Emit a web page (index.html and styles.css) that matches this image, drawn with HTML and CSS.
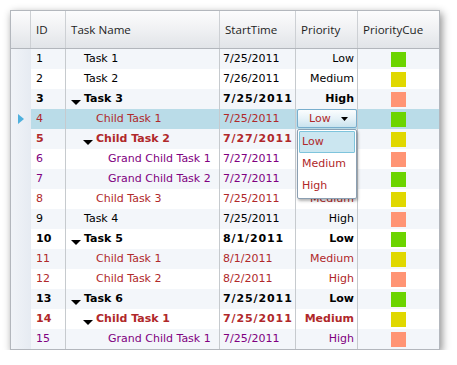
FILE: index.html
```html
<!DOCTYPE html>
<html>
  <head>
    <title>Tree Grid</title>
    <link rel="stylesheet" href="styles.css">
  </head>
  <body>
    <div class="grid">
      <div class="row head">
        <div class="cell ind"></div>
        <div class="cell">ID</div>
        <div class="cell">Task Name</div>
        <div class="cell">StartTime</div>
        <div class="cell">Priority</div>
        <div class="cell last">PriorityCue</div>
      </div>

      <div class="row alt">
        <div class="cell ind"></div>
        <div class="cell id">1</div>
        <div class="cell name lv0"><span class="slot"></span>Task 1</div>
        <div class="cell date">7/25/2011</div>
        <div class="cell prio">Low</div>
        <div class="cell last cue"><span class="sq low"></span></div>
      </div>
      <div class="row">
        <div class="cell ind"></div>
        <div class="cell id">2</div>
        <div class="cell name lv0"><span class="slot"></span>Task 2</div>
        <div class="cell date">7/26/2011</div>
        <div class="cell prio">Medium</div>
        <div class="cell last cue"><span class="sq med"></span></div>
      </div>
      <div class="row alt bold">
        <div class="cell ind"></div>
        <div class="cell id">3</div>
        <div class="cell name lv0"><span class="slot"><svg width="10" height="5" viewBox="0 0 10 5"><path d="M0 0h10l-5 5z"/></svg></span>Task 3</div>
        <div class="cell date">7/25/2011</div>
        <div class="cell prio">High</div>
        <div class="cell last cue"><span class="sq high"></span></div>
      </div>
      <div class="row sel child">
        <div class="cell ind"><svg width="6" height="10" viewBox="0 0 6 10"><path d="M0 0l6 5-6 5z" fill="#4fb0dd"/></svg></div>
        <div class="cell id">4</div>
        <div class="cell name lv1"><span class="slot"></span>Child Task 1</div>
        <div class="cell date">7/25/2011</div>
        <div class="cell prio edit">
          <div class="combo">Low<svg width="7" height="4" viewBox="0 0 7 4"><path d="M0 0h7l-3.5 4z"/></svg></div>
          <div class="popup">
            <div class="opt on">Low</div>
            <div class="opt">Medium</div>
            <div class="opt">High</div>
          </div>
        </div>
        <div class="cell last cue"><span class="sq low"></span></div>
      </div>
      <div class="row alt child bold">
        <div class="cell ind"></div>
        <div class="cell id">5</div>
        <div class="cell name lv1"><span class="slot"><svg width="10" height="5" viewBox="0 0 10 5"><path d="M0 0h10l-5 5z"/></svg></span>Child Task 2</div>
        <div class="cell date">7/27/2011</div>
        <div class="cell prio">Medium</div>
        <div class="cell last cue"><span class="sq med"></span></div>
      </div>
      <div class="row grand">
        <div class="cell ind"></div>
        <div class="cell id">6</div>
        <div class="cell name lv2"><span class="slot"></span>Grand Child Task 1</div>
        <div class="cell date">7/27/2011</div>
        <div class="cell prio">High</div>
        <div class="cell last cue"><span class="sq high"></span></div>
      </div>
      <div class="row alt grand">
        <div class="cell ind"></div>
        <div class="cell id">7</div>
        <div class="cell name lv2"><span class="slot"></span>Grand Child Task 2</div>
        <div class="cell date">7/27/2011</div>
        <div class="cell prio">Low</div>
        <div class="cell last cue"><span class="sq low"></span></div>
      </div>
      <div class="row child">
        <div class="cell ind"></div>
        <div class="cell id">8</div>
        <div class="cell name lv1"><span class="slot"></span>Child Task 3</div>
        <div class="cell date">7/25/2011</div>
        <div class="cell prio">Medium</div>
        <div class="cell last cue"><span class="sq med"></span></div>
      </div>
      <div class="row alt">
        <div class="cell ind"></div>
        <div class="cell id">9</div>
        <div class="cell name lv0"><span class="slot"></span>Task 4</div>
        <div class="cell date">7/25/2011</div>
        <div class="cell prio">High</div>
        <div class="cell last cue"><span class="sq high"></span></div>
      </div>
      <div class="row bold">
        <div class="cell ind"></div>
        <div class="cell id">10</div>
        <div class="cell name lv0"><span class="slot"><svg width="10" height="5" viewBox="0 0 10 5"><path d="M0 0h10l-5 5z"/></svg></span>Task 5</div>
        <div class="cell date">8/1/2011</div>
        <div class="cell prio">Low</div>
        <div class="cell last cue"><span class="sq low"></span></div>
      </div>
      <div class="row alt child">
        <div class="cell ind"></div>
        <div class="cell id">11</div>
        <div class="cell name lv1"><span class="slot"></span>Child Task 1</div>
        <div class="cell date">8/1/2011</div>
        <div class="cell prio">Medium</div>
        <div class="cell last cue"><span class="sq med"></span></div>
      </div>
      <div class="row child">
        <div class="cell ind"></div>
        <div class="cell id">12</div>
        <div class="cell name lv1"><span class="slot"></span>Child Task 2</div>
        <div class="cell date">8/2/2011</div>
        <div class="cell prio">High</div>
        <div class="cell last cue"><span class="sq high"></span></div>
      </div>
      <div class="row alt bold">
        <div class="cell ind"></div>
        <div class="cell id">13</div>
        <div class="cell name lv0"><span class="slot"><svg width="10" height="5" viewBox="0 0 10 5"><path d="M0 0h10l-5 5z"/></svg></span>Task 6</div>
        <div class="cell date">7/25/2011</div>
        <div class="cell prio">Low</div>
        <div class="cell last cue"><span class="sq low"></span></div>
      </div>
      <div class="row child bold">
        <div class="cell ind"></div>
        <div class="cell id">14</div>
        <div class="cell name lv1"><span class="slot"><svg width="10" height="5" viewBox="0 0 10 5"><path d="M0 0h10l-5 5z"/></svg></span>Child Task 1</div>
        <div class="cell date">7/25/2011</div>
        <div class="cell prio">Medium</div>
        <div class="cell last cue"><span class="sq med"></span></div>
      </div>
      <div class="row alt grand">
        <div class="cell ind"></div>
        <div class="cell id">15</div>
        <div class="cell name lv2"><span class="slot"></span>Grand Child Task 1</div>
        <div class="cell date">7/25/2011</div>
        <div class="cell prio">High</div>
        <div class="cell last cue"><span class="sq high"></span></div>
      </div>
    </div>
  </body>
</html>
```

FILE: styles.css
```css
body {
  margin: 0;
  background-color: white;
  font-family: "DejaVu Sans", Verdana, sans-serif;
  font-size: 11px;
  color: #000;
}
.grid {
  margin: 10px 0 0 10px;
  width: 430px;
  box-sizing: border-box;
  border: 1px solid #b3b7bd;
  background-color: white;
  box-shadow: 2px 3px 8px rgba(0, 0, 0, 0.45);
}
.row {
  display: grid;
  grid-template-columns: 20px 35px 154px 76px 62px 81px;
  height: 20px;
  line-height: 20px;
}
.cell {
  box-sizing: border-box;
  border-right: 1px solid #c6cace;
  white-space: nowrap;
  overflow: hidden;
}
.cell.last {
  border-right: none;
}
.cell.ind {
  border-right: none;
  background: linear-gradient(to right, #f1f4f8, #e6ebf2);
  display: flex;
  align-items: center;
  padding-left: 7px;
}

/* header */
.head {
  height: 37px;
  line-height: 37px;
  border-bottom: 1px solid #b2b6bc;
  background: linear-gradient(#fcfcfd, #f1f2f4 45%, #e1e4e8);
  font-family: "Open Sans", sans-serif;
  font-size: 11.6px;
  color: #1e1e1e;
}
.head .cell {
  padding-left: 5px;
  border-right-color: #cdd0d4;
}
.head .cell.ind {
  background: none;
  border-right: 1px solid #cdd0d4;
}

/* body rows */
.alt {
  background-color: #f3f6fa;
}
.sel {
  background-color: #badce8;
}
.id {
  padding-left: 5px;
}
.name {
  display: flex;
  align-items: center;
}
.slot {
  display: inline-flex;
  width: 13px;
  height: 20px;
  align-items: center;
  padding-top: 7px;
  box-sizing: border-box;
}
.lv0 { padding-left: 5px; }
.lv1 { padding-left: 17px; }
.lv2 { padding-left: 29px; }
.date {
  padding-left: 3px;
}
.prio {
  text-align: right;
  padding-right: 3px;
}
.cue {
  display: flex;
  align-items: center;
  justify-content: center;
  padding-right: 1px;
}
.sq {
  width: 15px;
  height: 15px;
}
.sq.low { background-color: #6cd400; }
.sq.med { background-color: #e0d800; }
.sq.high { background-color: #ff9474; }

.bold {
  font-weight: bold;
}
.bold .date {
  letter-spacing: 0.9px;
}
.child {
  color: #b0282a;
}
.grand {
  color: #800080;
}

/* combo editor */
.prio.edit {
  overflow: visible;
  position: relative;
  padding: 0 0 1px 1px;
  text-align: left;
}
.combo {
  height: 19px;
  box-sizing: border-box;
  border: 1px solid #78aecd;
  border-radius: 2px;
  background: linear-gradient(#fbfdfe, #e6f2f8 50%, #c9e3ee);
  line-height: 17px;
  padding-left: 11px;
  display: flex;
  align-items: center;
  gap: 10px;
}
.combo svg {
  margin-top: 1px;
}
.popup {
  position: absolute;
  top: 20px;
  left: 1px;
  width: 60px;
  height: 70px;
  box-sizing: border-box;
  border: 1px solid #8b9fb2;
  border-radius: 2px;
  background-color: white;
  box-shadow: 1px 2px 3px rgba(0, 0, 0, 0.3);
  padding: 1px;
  z-index: 2;
}
.opt {
  height: 22px;
  line-height: 22px;
  padding-left: 3px;
  box-sizing: border-box;
}
.opt.on {
  background-color: #cbe6f0;
  border: 1px solid #7ec4dc;
  border-radius: 1px;
  line-height: 20px;
  padding-left: 2px;
}
```
